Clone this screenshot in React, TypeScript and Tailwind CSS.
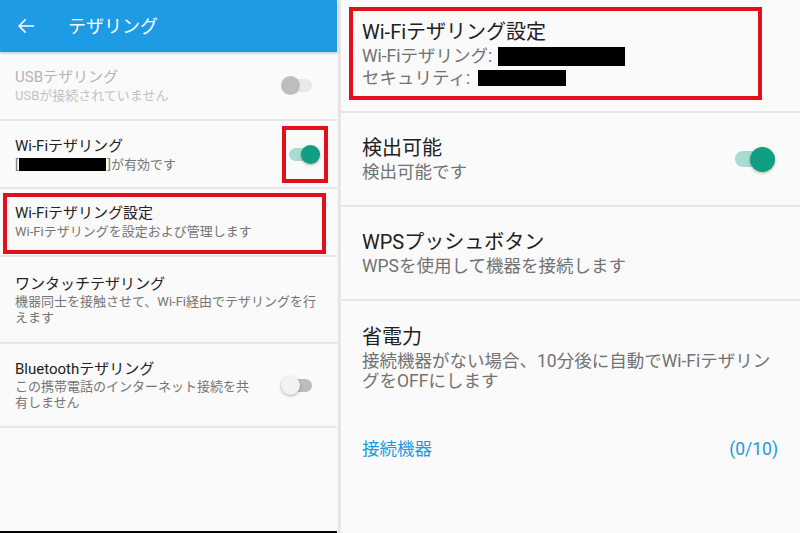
type Props = {
  on: boolean;
  disabled?: boolean;
  big?: boolean;
};

const Toggle = ({ on, disabled, big }: Props) => {
  const trackColor = on ? "bg-[#a9dccf]" : disabled ? "bg-[#e9e9e9]" : "bg-[#bdbdbd]";
  const thumbColor = on ? "bg-[#119f83]" : disabled ? "bg-[#bdbdbd]" : "bg-[#f2f2f2]";
  return (
    <div
      className={`relative flex items-center ${big ? "w-[40px] h-[25px]" : "w-[31px] h-[19px]"}`}
    >
      <div className={`w-full rounded-full ${trackColor} ${big ? "h-[16px]" : "h-[13px]"}`} />
      <div
        className={`absolute top-0 rounded-full ${thumbColor} ${big ? "w-[25px] h-[25px]" : "w-[19px] h-[19px]"} ${on ? "right-0" : "left-0"} ${disabled ? "" : "shadow-[0_1px_3px_rgba(0,0,0,0.3)]"}`}
      />
    </div>
  );
};

const Divider = () => <div className="h-[2px] bg-[#e6e6e6]" />;

const App = () => {
  return (
    <div className="flex w-[800px] h-[533px] bg-[#fafafa] overflow-hidden font-[Roboto,'Noto_Sans_CJK_JP',sans-serif]">
      {/* left: tethering list */}
      <div className="w-[337px] flex flex-col">
        <div className="h-[52px] bg-[#1e9be5] flex items-center shadow-[0_1px_3px_rgba(0,0,0,0.25)] relative">
          <svg viewBox="0 0 24 24" className="ml-[14px] w-6 h-6" fill="#fff">
            <path d="M20 11.2H6.9l5.3-5.3-1.1-1.1L4 12l7.1 7.2 1.1-1.1-5.3-5.3H20v-1.6z" />
          </svg>
          <span className="ml-[30px] text-[18px] text-white">テザリング</span>
        </div>

        <div className="h-[67px] flex items-center justify-between pl-[15px] pr-[25px]">
          <div>
            <div className="text-[15px] leading-[20px] text-[#b4b4b4]">USBテザリング</div>
            <div className="text-[13px] leading-[17px] text-[#c2c2c2]">USBが接続されていません</div>
          </div>
          <Toggle on={false} disabled />
        </div>
        <Divider />

        <div className="h-[66px] flex items-center justify-between pl-[15px] pr-[9px]">
          <div>
            <div className="text-[15px] leading-[20px] text-[#222]">Wi-Fiテザリング</div>
            <div className="text-[13px] leading-[17px] text-[#757575] flex items-center">
              [<span className="inline-block w-[87px] h-[13px] bg-black mx-[1px]" />]が有効です
            </div>
          </div>
          <div className="w-[46px] h-[57px] border-4 border-[#e3101b] flex items-center justify-end pr-[4px]">
            <Toggle on />
          </div>
        </div>
        <Divider />

        <div className="h-[66px] pl-[3px] pr-[11px] pt-[4px] pb-[1px]">
          <div className="h-full border-4 border-[#e3101b] pl-[8px] pt-[6px]">
            <div className="text-[15px] leading-[20px] text-[#222]">Wi-Fiテザリング設定</div>
            <div className="text-[13px] leading-[17px] text-[#757575]">Wi-Fiテザリングを設定および管理します</div>
          </div>
        </div>
        <Divider />

        <div className="h-[85px] flex items-center pl-[15px]">
          <div>
            <div className="text-[15px] leading-[20px] text-[#222]">ワンタッチテザリング</div>
            <div className="text-[13px] leading-[16px] text-[#757575]">
              機器同士を接触させて、Wi-Fi経由でテザリングを行
              <br />
              えます
            </div>
          </div>
        </div>
        <Divider />

        <div className="h-[82px] flex items-center justify-between pl-[15px] pr-[25px]">
          <div>
            <div className="text-[15px] leading-[20px] text-[#222]">Bluetoothテザリング</div>
            <div className="text-[13px] leading-[16px] text-[#757575]">
              この携帯電話のインターネット接続を共
              <br />
              有しません
            </div>
          </div>
          <Toggle on={false} />
        </div>
        <Divider />

        <div className="flex-1" />
        <div className="h-[2px] bg-black" />
      </div>

      <div className="w-[4px] bg-[#e6e6e6] border-l border-[#f4f4f4]" />

      {/* right: Wi-Fi tethering settings */}
      <div className="flex-1 flex flex-col">
        <div className="h-[111px] pl-[8px] pt-[7px]">
          <div className="w-[413px] h-[93px] border-4 border-[#e3101b] pl-[9px] pt-[8px]">
            <div className="text-[20px] leading-[26px] text-[#202020]">Wi-Fiテザリング設定</div>
            <div className="text-[17.5px] leading-[22px] text-[#727272] flex items-center">
              Wi-Fiテザリング:
              <span className="inline-block w-[127px] h-[19px] bg-black ml-[6px]" />
            </div>
            <div className="text-[17.5px] leading-[22px] text-[#727272] flex items-center">
              セキュリティ:
              <span className="inline-block w-[88px] h-[16px] bg-black ml-[8px]" />
            </div>
          </div>
        </div>
        <Divider />

        <div className="h-[92px] flex items-center justify-between pl-[21px] pr-[25px]">
          <div>
            <div className="text-[20px] leading-[26px] text-[#202020]">検出可能</div>
            <div className="mt-[1px] text-[17.5px] leading-[21px] text-[#727272]">検出可能です</div>
          </div>
          <Toggle on big />
        </div>
        <Divider />

        <div className="h-[92px] flex items-center pl-[21px]">
          <div>
            <div className="text-[20px] leading-[26px] text-[#202020]">WPSプッシュボタン</div>
            <div className="mt-[1px] text-[17.5px] leading-[21px] text-[#727272]">WPSを使用して機器を接続します</div>
          </div>
        </div>
        <Divider />

        <div className="pt-[23px] pl-[21px]">
          <div className="text-[20px] leading-[26px] text-[#202020]">省電力</div>
          <div className="mt-[1px] text-[17.5px] leading-[20px] text-[#727272]">
            接続機器がない場合、10分後に自動でWi-Fiテザリン
            <br />
            グをOFFにします
          </div>
        </div>

        <div className="mt-[46px] flex items-center justify-between pl-[21px] pr-[22px] text-[17.5px] leading-[24px] text-[#1a9be6]">
          <span>接続機器</span>
          <span>(0/10)</span>
        </div>
      </div>
    </div>
  );
};

export default App;
